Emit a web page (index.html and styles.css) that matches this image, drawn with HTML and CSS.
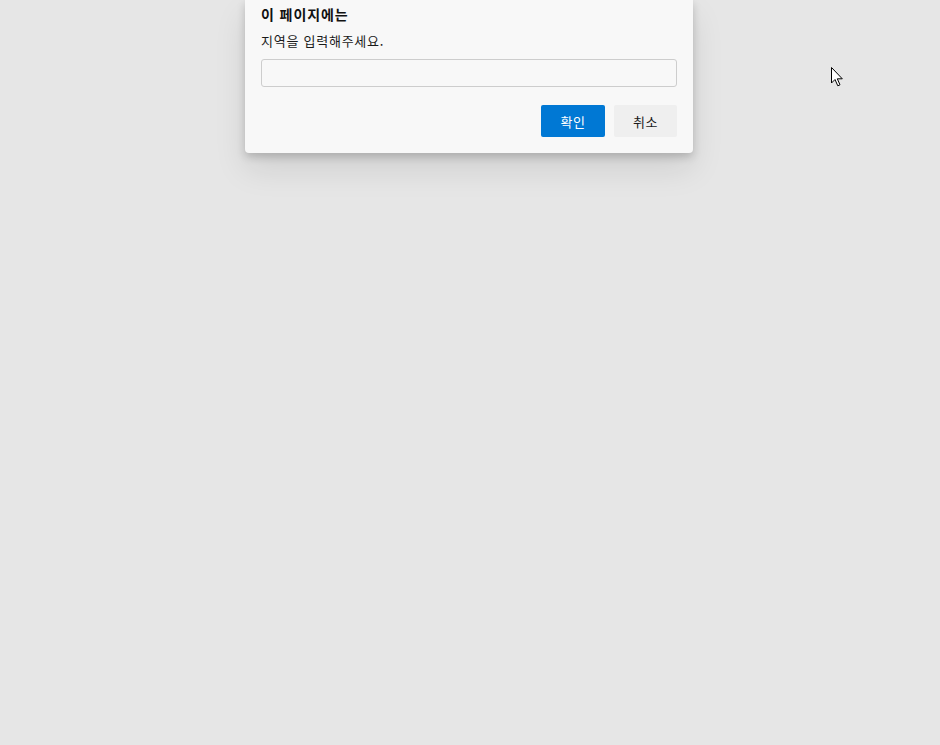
FILE: index.html
```html
<!DOCTYPE html>
<html lang="ko">
<head>
<meta charset="utf-8">
<link rel="stylesheet" href="styles.css">
</head>
<body>
<div class="page">
  <div class="dialog">
    <div class="title">이 페이지에는</div>
    <div class="message">지역을 입력해주세요.</div>
    <input class="field" type="text">
    <div class="actions">
      <button class="btn primary">확인</button>
      <button class="btn secondary">취소</button>
    </div>
  </div>
  <svg class="cursor" width="13" height="20" viewBox="0 0 13 20">
    <path d="M0.5 0.5 L0.5 16 L4 12.5 L6.8 18.8 L9 17.8 L6.3 11.8 L11.3 11.8 Z" fill="#fff" stroke="#000" stroke-width="1" stroke-linejoin="miter"/>
  </svg>
</div>
</body>
</html>
```
FILE: styles.css
```css
html, body {
  margin: 0;
  padding: 0;
  height: 100%;
}
body {
  background: #e6e6e6;
  font-family: "Noto Sans CJK KR", "Liberation Sans", sans-serif;
}
.page {
  position: relative;
  width: 940px;
  height: 745px;
  overflow: hidden;
  display: flex;
  justify-content: center;
}
.dialog {
  box-sizing: border-box;
  width: 448px;
  height: 153px;
  margin-right: 2px;
  background: #f8f8f8;
  border-radius: 0 0 4px 4px;
  box-shadow: 0 4px 8px rgba(0,0,0,0.18), 0 16px 32px rgba(0,0,0,0.10);
  padding: 3px 16px 16px 16px;
  display: flex;
  flex-direction: column;
}
.title {
  font-size: 14px;
  font-weight: 700;
  color: #111;
  line-height: 22px;
  letter-spacing: 0.9px;
}
.message {
  margin-top: 6px;
  font-size: 13px;
  color: #1a1a1a;
  line-height: 20px;
  letter-spacing: 0.75px;
}
.field {
  box-sizing: border-box;
  margin-top: 8px;
  width: 416px;
  height: 28px;
  border: 1px solid #cdcdcd;
  border-radius: 3px;
  background: #f8f8f8;
  outline: none;
}
.actions {
  margin-top: 18px;
  display: flex;
  justify-content: flex-end;
  gap: 9px;
}
.btn {
  width: 64px;
  height: 32px;
  border: none;
  border-radius: 2px;
  font-family: "Noto Sans CJK KR", "Liberation Sans", sans-serif;
  font-size: 13px;
  letter-spacing: 0.5px;
  padding: 0;
}
.primary {
  background: #0078d4;
  color: #fff;
}
.secondary {
  width: 63px;
  background: #efefef;
  color: #1a1a1a;
}
.cursor {
  position: absolute;
  left: 831px;
  top: 67px;
}
```
